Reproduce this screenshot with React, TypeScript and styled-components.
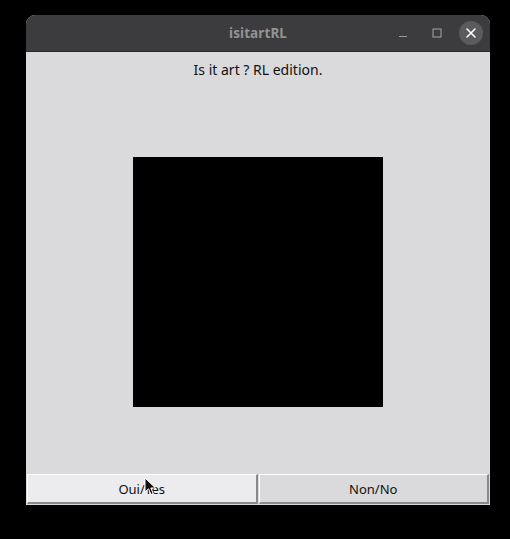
import React from "react";
import styled, { createGlobalStyle } from "styled-components";

const Global = createGlobalStyle`
  html, body { margin: 0; padding: 0; background: #000; }
  body { width: 510px; height: 539px; overflow: hidden; }
`;

const Screen = styled.div`
  width: 510px;
  height: 539px;
  padding: 15px 0 0 26px;
  box-sizing: border-box;
  position: relative;
`;

const Window = styled.div`
  width: 464px;
  height: 490px;
  display: flex;
  flex-direction: column;
  border-radius: 9px 9px 0 0;
  overflow: hidden;
  background: #dad9db;
`;

const TitleBar = styled.div`
  height: 37px;
  flex: none;
  background: #3c3b3d;
  border-bottom: 1px solid #2a292b;
  box-sizing: border-box;
  position: relative;
  display: flex;
  align-items: center;
  justify-content: center;
`;

const Title = styled.div`
  font-family: "Noto Sans", "DejaVu Sans", sans-serif;
  font-weight: 700;
  font-size: 13.5px;
  color: #939393;
  letter-spacing: 0.1px;
`;

const Controls = styled.div`
  position: absolute;
  right: 7px;
  top: 0;
  height: 36px;
  display: flex;
  align-items: center;
  gap: 10px;
`;

const CtrlButton = styled.div<{ $round?: boolean }>`
  width: 24px;
  height: 24px;
  display: flex;
  align-items: center;
  justify-content: center;
  border-radius: 50%;
  background: ${(p) => (p.$round ? "#5b5a5c" : "transparent")};
`;

const Content = styled.div`
  flex: 1;
  display: flex;
  flex-direction: column;
  background: #dad9db;
`;

const Heading = styled.div`
  height: 38px;
  flex: none;
  box-sizing: border-box;
  padding-top: 8px;
  text-align: center;
  font-family: "Noto Sans", "DejaVu Sans", sans-serif;
  font-size: 14px;
  line-height: 20px;
  color: #111;
`;

const Stage = styled.div`
  flex: 1;
  display: flex;
  align-items: center;
  justify-content: center;
`;

const Canvas = styled.div`
  width: 250px;
  height: 250px;
  background: #000;
`;

const ButtonRow = styled.div`
  height: 30px;
  flex: none;
  display: flex;
  gap: 1px;
  margin: 0 1px 1px 1px;
`;

const TkButton = styled.div<{ $active?: boolean }>`
  flex: 1;
  box-sizing: border-box;
  display: flex;
  align-items: center;
  justify-content: center;
  background: ${(p) => (p.$active ? "#ecebed" : "#dad9db")};
  border-top: 1px solid #fefefe;
  border-left: 1px solid #fefefe;
  border-right: 2px solid #8a898b;
  border-bottom: 2px solid #8a898b;
  font-family: "Noto Sans", "DejaVu Sans", sans-serif;
  font-size: 13px;
  color: #111;
`;

const Cursor = styled.svg`
  position: absolute;
  left: 144px;
  top: 477px;
`;

export default function App() {
  return (
    <>
      <Global />
      <Screen>
        <Window>
          <TitleBar>
            <Title>isitartRL</Title>
            <Controls>
              <CtrlButton>
                <svg width="12" height="12" viewBox="0 0 12 12">
                  <line x1="2" y1="9.5" x2="10" y2="9.5" stroke="#9a9a9a" strokeWidth="1" />
                </svg>
              </CtrlButton>
              <CtrlButton>
                <svg width="12" height="12" viewBox="0 0 12 12">
                  <rect x="2" y="2" width="8" height="8" fill="none" stroke="#a8a8a8" strokeWidth="1" />
                </svg>
              </CtrlButton>
              <CtrlButton $round>
                <svg width="12" height="12" viewBox="0 0 12 12">
                  <path d="M2 2 L10 10 M10 2 L2 10" stroke="#ffffff" strokeWidth="1.6" strokeLinecap="round" />
                </svg>
              </CtrlButton>
            </Controls>
          </TitleBar>
          <Content>
            <Heading>Is it art ? RL edition.</Heading>
            <Stage>
              <Canvas />
            </Stage>
            <ButtonRow>
              <TkButton $active>Oui/Yes</TkButton>
              <TkButton>Non/No</TkButton>
            </ButtonRow>
          </Content>
        </Window>
        <Cursor width="14" height="20" viewBox="0 0 14 20">
          <path d="M1 1 L1 15 L4.5 11.8 L7 17.5 L9.2 16.5 L6.8 11 L11.5 11 Z" fill="#111" stroke="#fff" strokeWidth="1" strokeLinejoin="round" />
        </Cursor>
      </Screen>
    </>
  );
}
